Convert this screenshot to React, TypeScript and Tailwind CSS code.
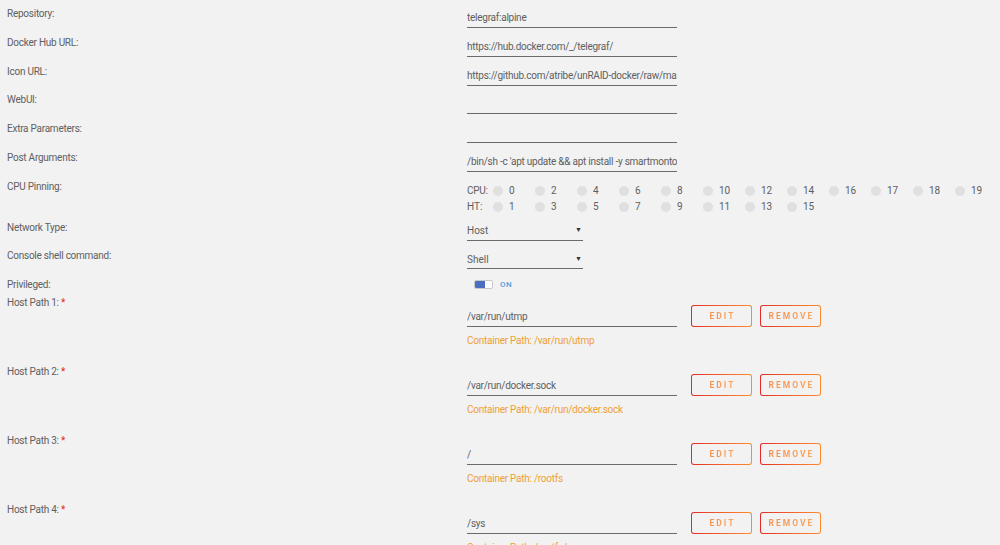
import type { ReactNode } from 'react'

const font = { fontFamily: 'Roboto, "Liberation Sans", sans-serif' }

const fields = [
  { label: 'Repository:', value: 'telegraf:alpine' },
  { label: 'Docker Hub URL:', value: 'https://hub.docker.com/_/telegraf/' },
  { label: 'Icon URL:', value: 'https://github.com/atribe/unRAID-docker/raw/master/icons/telegraf.png' },
  { label: 'WebUI:', value: '' },
  { label: 'Extra Parameters:', value: '' },
  { label: 'Post Arguments:', value: "/bin/sh -c 'apt update && apt install -y smartmontools && telegraf'" },
]

const cpuRow = ['0', '2', '4', '6', '8', '10', '12', '14', '16', '17', '18', '19']
const htRow = ['1', '3', '5', '7', '9', '11', '13', '15']

const paths = [
  { host: '/var/run/utmp', container: '/var/run/utmp' },
  { host: '/var/run/docker.sock', container: '/var/run/docker.sock' },
  { host: '/', container: '/rootfs' },
  { host: '/sys', container: '/rootfs/sys' },
]

function Row({ label, height, children }: { label: ReactNode; height: string; children: ReactNode }) {
  return (
    <div className={`flex ${height}`}>
      <div className="w-[460px] shrink-0 pl-[7px] pt-[8px] text-[10px] leading-[12px] tracking-[-0.25px] text-[#606060]">{label}</div>
      <div className="flex-1 pl-[7px]">{children}</div>
    </div>
  )
}

function TextField({ value }: { value: string }) {
  return (
    <input
      readOnly
      value={value}
      className="w-[210px] h-[20px] bg-transparent border-b border-[#6a6a6a] text-[10px] tracking-[-0.25px] text-[#606060] outline-none p-0"
      style={font}
    />
  )
}

function Pin({ n }: { n: string }) {
  return (
    <div className="flex w-[42px] items-center gap-[6px]">
      <span className="h-[10px] w-[10px] rounded-full bg-[#e0e0e0]" />
      <span className="text-[10px] text-[#606060]">{n}</span>
    </div>
  )
}

function Select({ value }: { value: string }) {
  return (
    <div className="mt-[8px] flex h-[19px] w-[116px] items-center justify-between border-b border-[#6a6a6a] text-[10px] text-[#606060]">
      <span>{value}</span>
      <span className="pr-[1px] text-[7px] text-[#333]">▼</span>
    </div>
  )
}

function GradButton({ label, width }: { label: string; width: string }) {
  return (
    <div className={`${width} h-[22px] rounded-[3px] bg-gradient-to-r from-[#e22828] to-[#ff8c2f] p-[1px]`}>
      <div className="flex h-full w-full items-center justify-center rounded-[2px] bg-[#f2f2f2]">
        <span className="bg-gradient-to-r from-[#f39050] to-[#fba45a] bg-clip-text pl-[2px] text-[8.5px] font-bold tracking-[2px] text-transparent">
          {label}
        </span>
      </div>
    </div>
  )
}

export default function App() {
  return (
    <div className="h-[545px] w-[1000px] overflow-hidden bg-[#f2f2f2]" style={font}>
      {fields.map(f => (
        <Row key={f.label} label={f.label} height="h-[28.75px]">
          <div className="pt-[4px]">
            <TextField value={f.value} />
          </div>
        </Row>
      ))}

      {/* CPU pinning */}
      <Row label="CPU Pinning:" height="h-[41px]">
        <div className="pt-[10px] text-[10px] text-[#606060]">
          <div className="flex h-[16px] items-center">
            <span className="w-[26px] tracking-[-0.3px]">CPU:</span>
            {cpuRow.map(n => <Pin key={n} n={n} />)}
          </div>
          <div className="flex h-[16px] items-center">
            <span className="w-[26px]">HT:</span>
            {htRow.map(n => <Pin key={n} n={n} />)}
          </div>
        </div>
      </Row>

      <Row label="Network Type:" height="h-[28.5px]">
        <Select value="Host" />
      </Row>
      <Row label="Console shell command:" height="h-[28.5px]">
        <Select value="Shell" />
      </Row>

      <Row label="Privileged:" height="h-[18.5px]">
        <div className="flex items-center gap-[7px] pl-[7px] pt-[8px]">
          <div className="flex h-[9px] w-[19px] overflow-hidden rounded-[2px] border border-[#c8c8c8]">
            <span className="w-[10px] bg-[#4a6fc0]" />
            <span className="flex-1 bg-white" />
          </div>
          <span className="text-[8px] font-medium tracking-[0.5px] text-[#4aa0dc]">ON</span>
        </div>
      </Row>

      {paths.map((p, i) => (
        <Row
          key={p.host}
          label={<>Host Path {i + 1}: <span className="text-[#e22828]">*</span></>}
          height="h-[69px]"
        >
          <div className="flex items-end gap-[14px] pt-[16px]">
            <TextField value={p.host} />
            <div className="flex gap-[8px]">
              <GradButton label="EDIT" width="w-[61px]" />
              <GradButton label="REMOVE" width="w-[61px]" />
            </div>
          </div>
          <div className="mt-[6px] text-[10px] tracking-[-0.25px] text-[#f0a032]">Container Path: {p.container}</div>
        </Row>
      ))}
    </div>
  )
}
